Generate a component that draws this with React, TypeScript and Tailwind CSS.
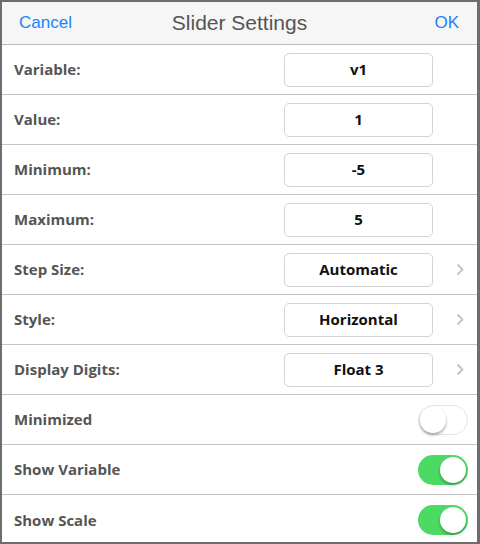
import React from 'react';

type Row = {
  label: string;
  value?: string;
  chevron?: boolean;
  toggle?: boolean;
  on?: boolean;
};

const rows: Row[] = [
  { label: 'Variable:', value: 'v1' },
  { label: 'Value:', value: '1' },
  { label: 'Minimum:', value: '-5' },
  { label: 'Maximum:', value: '5' },
  { label: 'Step Size:', value: 'Automatic', chevron: true },
  { label: 'Style:', value: 'Horizontal', chevron: true },
  { label: 'Display Digits:', value: 'Float 3', chevron: true },
  { label: 'Minimized', toggle: true, on: false },
  { label: 'Show Variable', toggle: true, on: true },
  { label: 'Show Scale', toggle: true, on: true },
];

const Toggle = ({ on }: { on: boolean }) => (
  <div
    className={
      on
        ? 'relative w-[50px] h-[30px] rounded-full bg-[#4cd964]'
        : 'relative w-[50px] h-[30px] rounded-full bg-white border border-[#e4e4e4]'
    }
  >
    <div
      className={
        on
          ? 'absolute top-[2px] right-[2px] w-[26px] h-[26px] rounded-full bg-white shadow-[0_2px_3px_rgba(0,0,0,0.3)]'
          : 'absolute top-[1px] left-[1px] w-[26px] h-[26px] rounded-full bg-white shadow-[0_2px_3px_rgba(0,0,0,0.35)]'
      }
    />
  </div>
);

const Chevron = () => (
  <svg width="8" height="13" viewBox="0 0 8 13" className="text-[#c2c2c2]">
    <path d="M1.5 1.5 L6.5 6.5 L1.5 11.5" fill="none" stroke="currentColor" strokeWidth="1.8" />
  </svg>
);

const App = () => {
  return (
    <div className="w-[480px] h-[544px] overflow-hidden bg-white border-[#6d6d6d] border-t-2 border-l-2 border-b-2 border-r-[3px] flex flex-col font-['Open_Sans',sans-serif]">
      <div className="h-[43px] shrink-0 bg-[#f6f6f6] border-b border-[#b9b9b9] grid grid-cols-[1fr_auto_1fr] items-center px-[17px] font-['Liberation_Sans',sans-serif]">
        <button className="justify-self-start text-[17px] text-[#1a82fb]">Cancel</button>
        <div className="text-[21px] text-[#555555]">Slider Settings</div>
        <button className="justify-self-end text-[17px] text-[#1a82fb] mr-[1px]">OK</button>
      </div>
      {rows.map((row, i) => (
        <div
          key={row.label}
          className={
            i < rows.length - 1
              ? 'h-[50px] shrink-0 border-b border-[#c4c4c4] flex items-center pl-[12px]'
              : 'h-[50px] shrink-0 flex items-center pl-[12px]'
          }
        >
          <div className="flex-1 text-[15px] font-bold text-[#555555]">{row.label}</div>
          {row.toggle ? (
            <div className="mr-[9px]">
              <Toggle on={!!row.on} />
            </div>
          ) : (
            <div className="flex items-center">
              <div className="w-[149px] h-[34px] rounded-[5px] border border-[#d4d4d4] flex items-center justify-center text-[15px] font-bold text-[#111111]">
                {row.value}
              </div>
              <div className="w-[44px] flex justify-end pr-[13px]">
                {row.chevron && <Chevron />}
              </div>
            </div>
          )}
        </div>
      ))}
    </div>
  );
};

export default App;
